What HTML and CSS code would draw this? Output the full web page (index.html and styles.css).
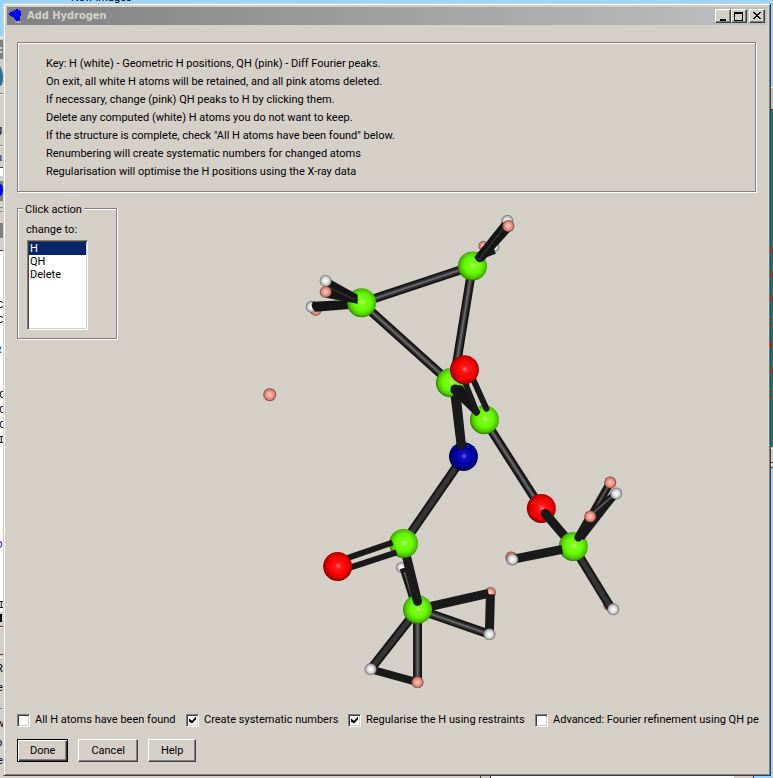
FILE: index.html
```html
<!DOCTYPE html>
<html lang="en">
<head>
<meta charset="utf-8">
<title>Add Hydrogen</title>
<link rel="stylesheet" href="styles.css">
</head>
<body>
<svg class="behind behind-top" width="200" height="3" aria-hidden="true">
  <text x="71" y="1">New images</text>
</svg>
<svg class="behind behind-left" width="3" height="778" aria-hidden="true">
  <rect width="3" height="36" fill="#99d6ff"/>
  <rect y="36" width="3" height="742" fill="#d4d0c8"/>
  <rect y="37" width="3" height="1" fill="#fff"/>
  <rect y="40" width="3" height="19" fill="#808080"/>
  <path d="M0 48h2M0 52h2" stroke="#d4d0c8" stroke-width="2"/>
  <path d="M0 66q3 5 3 12t-3 8z" fill="#2c6f9c"/>
  <path d="M0 93.500h3M0 145.500h3" stroke="#808080"/>
  <path d="M0 94.500h3M0 146.500h3" stroke="#fff"/>
  <text x="-4" y="133">g</text>
  <text x="-4" y="161" fill="#0a246a">u</text>
  <rect y="167" width="3" height="9" fill="#fff"/>
  <path d="M0 167.500h3" stroke="#404040"/>
  <rect y="181" width="3" height="20" fill="#808080"/>
  <ellipse cx="0" cy="190" rx="3" ry="6" fill="#00f"/>
  <text x="-3" y="215" fill="#808080">Fi</text>
  <rect y="223" width="3" height="15" fill="#808080"/>
  <rect y="251" width="3" height="361" fill="#fff"/>
  <path d="M0 250.500h3" stroke="#404040"/>
  <g class="code">
    <text x="-3" y="308">C</text><text x="-3" y="323">C</text>
    <text x="-5" y="353" fill="#0040a0">R</text>
    <text x="-1" y="398">C</text><text x="-1" y="413">C</text><text x="-1" y="428">C</text>
    <text x="-2" y="443">I</text><text x="1" y="533" fill="#c60">(</text>
    <text x="-4" y="548" fill="#408">D</text><text x="-2" y="608">I</text>
  </g>
  <rect y="614" width="2" height="8"/>
  <path d="M0 626.500h3M0 654.500h3" stroke="#404040"/>
  <path d="M0 627.500h3M0 657.500h3" stroke="#fff"/>
  <text x="-4" y="672">R</text><text x="-3" y="691">e</text>
  <path d="M0 708.500h2" stroke="#39c"/>
  <text x="-4" y="727">w</text><text x="-4" y="746">o</text><text x="-3" y="764">e</text>
</svg>
<svg class="behind behind-right" width="2" height="778" aria-hidden="true">
  <rect width="2" height="778" fill="#99d6ff"/>
  <rect y="87" width="2" height="23" fill="#c0c0c0"/>
  <path d="M0 87.500h2" stroke="#fff"/><path d="M0 109.500h2" stroke="#404040"/>
  <rect y="110" width="2" height="337" fill="#008080"/>
  <path d="M0 247.500h1.500v5H0M0 271.500h1.500v5H0M0 295.500h1.500v5H0M0 319.500h2M0 324.500h2M0 344.500h2M.5 340v8M0 367.500h1.500v5H0M0 391.500h2M0 396.500h2" fill="none" stroke="red"/>
  <rect y="447" width="2" height="21" fill="#d4d0c8"/>
  <path d="M0 448.500h2M0 464.500h2" stroke="#fff"/><path d="M0 462.500h2M0 467.500h2" stroke="#404040"/>
</svg>
<div class="behind behind-bottom" aria-hidden="true"><i class="pane"></i><i></i><i class="list"></i><i class="scroll"></i><i class="sky"></i></div>

<main class="window">
  <header class="titlebar">
    <svg class="logo" width="14" height="15" viewBox="0 0 14 15" aria-hidden="true">
      <path d="M1 3h2V2h2V1h2V0h2v1h2v1h1v5h-1v3h-1v1H9v1H7v-1H6v-1H5V8H3V7H1V6H0V4h1z" fill="#00f"/>
      <path d="M8 12h3v1h1v1H6v-1h2z" fill="#a5a5a5"/>
      <path d="M7 10h4v2H8z" fill="#1818e8"/>
      <path d="M2 6.500l4 1 4-4" stroke="#0000c0" fill="none"/>
    </svg>
    <h1>Add Hydrogen</h1>
    <button class="sys" type="button" aria-label="Minimize"><svg width="12" height="10"><path d="M3 8h6v2H3z"/></svg></button>
    <button class="sys" type="button" aria-label="Maximize"><svg width="12" height="10"><path d="M1 1h9v9H1zM2 3v6h7V3z" fill-rule="evenodd"/></svg></button>
    <button class="sys close" type="button" aria-label="Close"><svg width="12" height="10"><path d="M2 1h2v1h1v1h2V2h1V1h2v1H9v1H8v1H7v1h1v1h1v1h1v1H8V7H7V6H5v1H4v1H2V7h1V6h1V5h1V4H4V3H3V2H2z"/></svg></button>
  </header>

  <div class="content">
    <section class="info groove">
      <p>Key: H (white) - Geometric H positions, QH (pink) - Diff Fourier peaks.</p>
      <p>On exit, all white H atoms will be retained, and all pink atoms deleted.</p>
      <p>If necessary, change (pink) QH peaks to H by clicking them.</p>
      <p>Delete any computed (white) H atoms you do not want to keep.</p>
      <p>If the structure is complete, check "All H atoms have been found" below.</p>
      <p>Renumbering will create systematic numbers for changed atoms</p>
      <p>Regularisation will optimise the H positions using the X-ray data</p>
    </section>

    <div class="work">
      <section class="action groove" aria-labelledby="action-title">
        <h2 id="action-title">Click action</h2>
        <label for="change">change to:</label>
        <select id="change" size="6">
          <option selected>H</option>
          <option>QH</option>
          <option>Delete</option>
        </select>
      </section>

      <svg class="scene" viewBox="117 207 639 494" role="img" aria-label="Molecule model">
        <defs>
          <radialGradient id="green" cx=".52" cy=".48" r=".53"><stop offset="0" stop-color="#c8ff78"/><stop offset=".2" stop-color="#78ff18"/><stop offset=".55" stop-color="#66fa00"/><stop offset=".85" stop-color="#4cc000"/><stop offset="1" stop-color="#2c7000"/></radialGradient>
          <radialGradient id="red" cx=".52" cy=".48" r=".53"><stop offset="0" stop-color="#ff8080"/><stop offset=".2" stop-color="#ff1818"/><stop offset=".6" stop-color="#f80000"/><stop offset=".85" stop-color="#c00000"/><stop offset="1" stop-color="#700000"/></radialGradient>
          <radialGradient id="blue" cx=".52" cy=".48" r=".53"><stop offset="0" stop-color="#6868e8"/><stop offset=".2" stop-color="#1010c0"/><stop offset=".6" stop-color="#0000a8"/><stop offset="1" stop-color="#000048"/></radialGradient>
          <radialGradient id="white"><stop offset="0" stop-color="#fff"/><stop offset=".4" stop-color="#e8e8e8"/><stop offset=".75" stop-color="#bcbcbc"/><stop offset="1" stop-color="#606060"/></radialGradient>
          <radialGradient id="pink"><stop offset="0" stop-color="#ffd8d0"/><stop offset=".4" stop-color="#f8a090"/><stop offset=".75" stop-color="#d48074"/><stop offset="1" stop-color="#704038"/></radialGradient>
          <path id="ring" d="M361 302 472 265M472 265 453 382M361 302 450 382M484 419 541 508"/>
          <path id="chain" d="M463 456 403 543"/>
          <path id="methyl" d="M417 609 370 669M417 609 417 682M417 609 489 634"/>
        </defs>

        <g class="bond">
          <use href="#ring" class="edge"/><use href="#ring" class="mid"/><use href="#ring" class="shine"/>
          <use href="#chain" class="edge"/><use href="#chain" class="mid"/>
        </g>

        <circle cx="483" cy="245" r="5" fill="url(#pink)"/>
        <circle cx="494" cy="246" r="5" fill="url(#white)"/>
        <path class="dark" d="M476 256 494 249"/>
        <circle cx="472" cy="265" r="14.500" fill="url(#green)"/>
        <circle cx="507" cy="220" r="6" fill="url(#white)"/>
        <path class="solid" d="M474 256 502 221 512 228 483 260Q477 264 474 256z"/>
        <path class="seam" d="M478 259 505 225"/>
        <circle cx="508" cy="225" r="6" fill="url(#pink)"/>

        <circle cx="315" cy="309" r="6" fill="url(#pink)"/>
        <circle cx="311" cy="306" r="6" fill="url(#white)"/>
        <path class="solid" d="M312 301 353 299 352 308 315 311Q309 307 312 301z"/>
        <circle cx="361" cy="302" r="14.500" fill="url(#green)"/>
        <path class="solid" d="M327 277 357 294V303L325 297z"/>
        <path class="seam" d="M329 287 355 299"/>
        <circle cx="325" cy="280" r="6" fill="url(#white)"/>
        <circle cx="325" cy="291" r="6" fill="url(#pink)"/>

        <path class="dark wide" d="M454 390 461 447"/>
        <circle cx="450" cy="382" r="14.500" fill="url(#green)"/>
        <circle cx="463" cy="456" r="14.500" fill="url(#blue)"/>
        <path class="dark wide round" d="M456 397 461 445"/>
        <circle cx="484" cy="419" r="14.500" fill="url(#green)"/>
        <path class="solid" d="M450 387Q452 383 456 384L462 385 480 411Q478 416 475 415L450 391z"/>
        <path class="dark thin round" d="M464 379 476 411M472 377 486 408"/>
        <path class="gap" d="M469 384 479 408"/>
        <circle cx="464" cy="369" r="14.500" fill="url(#red)"/>

        <circle cx="541" cy="508" r="14.500" fill="url(#red)"/>
        <path class="dark wide round" d="M545 513 573 546"/>
        <circle cx="608" cy="605" r="5" fill="url(#pink)"/>
        <g class="bond"><path class="edge" d="M573 546 611 608"/><path class="mid" d="M573 546 611 608"/></g>
        <circle cx="613" cy="609" r="6" fill="url(#white)"/>
        <circle cx="573" cy="546" r="14.500" fill="url(#green)"/>
        <circle cx="511" cy="557" r="6" fill="url(#pink)"/>
        <path class="dark wide" d="M512 559 562 549"/>
        <circle cx="512" cy="559" r="6" fill="url(#white)"/>
        <path class="dark thin" d="M581 538 616 493"/>
        <path class="dark" d="M585 526 610 482"/>
        <path class="sheen" d="M593 512 609 484"/>
        <path class="dark" d="M590 516 616 493"/>
        <path class="sheen" d="M592 513 612 496"/>
        <path class="dark round" d="M578 537 590 516"/>
        <circle cx="610" cy="482" r="6" fill="url(#pink)"/>
        <circle cx="616" cy="493" r="6" fill="url(#white)"/>
        <circle cx="590" cy="516" r="6" fill="url(#pink)"/>

        <circle cx="401" cy="567" r="5.500" fill="url(#white)"/>
        <path class="dark thin" d="M402 568 413 602"/>
        <path class="sheen" d="M404 572 413 600"/>
        <circle cx="490" cy="592" r="5.500" fill="url(#pink)"/>
        <path class="dark wide" d="M417 609 488 593"/>
        <path class="dark wide" d="M490 594 489 631"/>
        <g class="bond"><use href="#methyl" class="edge"/><use href="#methyl" class="mid"/><path class="shine" d="M417 609V682M417 609 489 634"/></g>
        <path class="dark" d="M370 669 417 682"/>
        <circle cx="489" cy="634" r="6" fill="url(#white)"/>
        <circle cx="370" cy="669" r="6" fill="url(#white)"/>
        <circle cx="417" cy="682" r="6" fill="url(#pink)"/>
        <circle cx="417" cy="609" r="14.500" fill="url(#green)"/>
        <path class="dark wide round" d="M405 552 417 601"/>
        <circle cx="403" cy="543" r="14.500" fill="url(#green)"/>
        <path class="dark thin" d="M340 560 392 542M344 569 396 552"/>
        <circle cx="337" cy="566" r="14.500" fill="url(#red)"/>
        <circle cx="269" cy="394" r="6.500" fill="url(#pink)"/>
      </svg>
    </div>

    <form class="options">
      <label><input type="checkbox">All H atoms have been found</label>
      <label><input type="checkbox" checked>Create systematic numbers</label>
      <label><input type="checkbox" checked>Regularise the H using restraints</label>
      <label><input type="checkbox">Advanced: Fourier refinement using QH pe</label>
    </form>
    <footer class="buttons">
      <button class="push default" type="button">Done</button>
      <button class="push" type="button">Cancel</button>
      <button class="push" type="button">Help</button>
    </footer>
  </div>
</main>
</body>
</html>
```
FILE: styles.css
```css
* { box-sizing: border-box; }

body {
  margin: 0;
  position: relative;
  min-height: 100vh;
  overflow: hidden;
  display: flex;
  background: #99d6ff;
  color: #000;
  font: 11px/18px Roboto, sans-serif;
}

h1, h2, p { margin: 0; font-size: 11px; }

button, select, input { font: inherit; color: inherit; margin: 0; }

/* Slivers of the windows that show past the dialog */
.behind { position: absolute; overflow: hidden; }
.behind-top { top: 0; left: 0; }
.behind-left { top: 0; left: 0; }
.behind-right { top: 0; right: 0; }
.behind-bottom {
  left: 0; right: 0; bottom: 0;
  height: 2px;
  display: grid;
  grid-template-columns: 481fr 9fr 244fr 20fr 19fr;
  background: #d4d0c8;
}
.behind-bottom .pane { border-right: 1px solid #404040; }
.behind-bottom .list { background: #fff; border-left: 1px solid #404040; }
.behind-bottom .scroll { border-right: 1px solid #404040; }
.behind-bottom .sky { background: #99d6ff; }
.code { font-family: "Liberation Mono", monospace; }

.window {
  position: relative;
  flex: 1;
  min-width: 0;
  margin: 3px 2px 2px 3px;
  padding: 3px;
  display: flex;
  flex-direction: column;
  background: #d4d0c8;
  border: 1px solid;
  border-color: #d4d0c8 #404040 #404040 #d4d0c8;
  box-shadow: inset 1px 1px #fff, inset -1px -1px #808080;
}

.titlebar {
  display: flex;
  align-items: center;
  height: 18px;
  padding: 0 2px;
  background: linear-gradient(90deg, #808080, #c0c0c0);
  color: #d4d0c8;
}
.titlebar h1 {
  flex: 1;
  margin-left: 4px;
  font-family: "DejaVu Sans Condensed", "DejaVu Sans", sans-serif;
  font-weight: bold;
}

.sys {
  width: 16px;
  height: 14px;
  padding: 1px;
  display: flex;
  background: #d4d0c8;
  border: 1px solid;
  border-color: #fff #404040 #404040 #fff;
  box-shadow: inset -1px -1px #808080;
}
.close { margin-left: 2px; }

.content {
  flex: 1;
  display: flex;
  flex-direction: column;
  padding: 17px 11px 10px 10px;
}

.groove {
  border: 1px solid #808080;
  box-shadow: 1px 1px #fff, inset 1px 1px #fff;
}

.info { padding: 12px 28px 10px; }

.work {
  flex: 1;
  display: grid;
  grid-template-columns: 101px 1fr;
  align-items: start;
  margin-top: 16px;
}

.action {
  width: 100px;
  padding: 0 8px 8px;
  display: flex;
  flex-direction: column;
  align-items: flex-start;
}
.action h2 {
  height: 12px;
  margin: -6px 0 6px -3px;
  padding: 0 2px;
  line-height: 14px;
  font-weight: normal;
  background: #d4d0c8;
}
.action select {
  width: 61px;
  height: 90px;
  margin: 1px 0 0 1px;
  overflow: hidden;
  background: #fff;
  border: 1px solid;
  border-color: #808080 #fff #fff #808080;
  border-radius: 0;
  box-shadow: inset 1px 1px #404040, inset -1px -1px #d4d0c8;
  padding: 1px;
  outline: none;
}
.action option {
  min-height: 13px;
  padding: 0 1px;
  line-height: 13px;
}
.action option:checked {
  background: #0a246a linear-gradient(#0a246a, #0a246a);
  color: #fff;
}

.scene { display: block; width: 100%; height: auto; }
.bond path, .bond use { fill: none; }
.edge { stroke: #161616; stroke-width: 9; }
.mid { stroke: #343434; stroke-width: 5; }
.shine { stroke: #666; stroke-width: 2; }
.dark { fill: none; stroke: #1a1a1a; stroke-width: 8; }
.thin { stroke-width: 6; }
.wide { stroke-width: 9; }
.round { stroke-linecap: round; }
.solid { fill: #151515; }
.seam { fill: none; stroke: #2c2c2c; stroke-width: 2; }
.sheen { fill: none; stroke: #555; stroke-width: 2; }
.gap { stroke: #d4d0c8; stroke-width: 1; }

.options {
  display: grid;
  grid-template-columns: 169px 162px 187px 1fr;
  margin-top: 8px;
}
.options label {
  display: flex;
  align-items: center;
  gap: 5px;
  white-space: nowrap;
}
.options input {
  appearance: none;
  flex: none;
  width: 13px;
  height: 13px;
  background: #fff;
  border: 1px solid;
  border-color: #808080 #fff #fff #808080;
  box-shadow: inset 1px 1px #404040, inset -1px -1px #d4d0c8;
}
.options input:checked::before {
  content: "";
  display: block;
  width: 7px;
  height: 7px;
  margin: 2px;
  background: #000;
  clip-path: polygon(0 29%, 43% 60%, 100% 0, 100% 43%, 43% 100%, 0 71%);
}

.buttons { display: flex; gap: 10px; margin-top: 10px; }
.push {
  height: 23px;
  padding: 0 12px;
  line-height: 21px;
  background: #d4d0c8;
  border: 1px solid;
  border-color: #fff #404040 #404040 #fff;
  box-shadow: inset -1px -1px #808080;
}
.default {
  border-color: #000;
  box-shadow: inset 1px 1px #fff, inset -1px -1px #404040, inset -2px -2px #808080;
}
```
